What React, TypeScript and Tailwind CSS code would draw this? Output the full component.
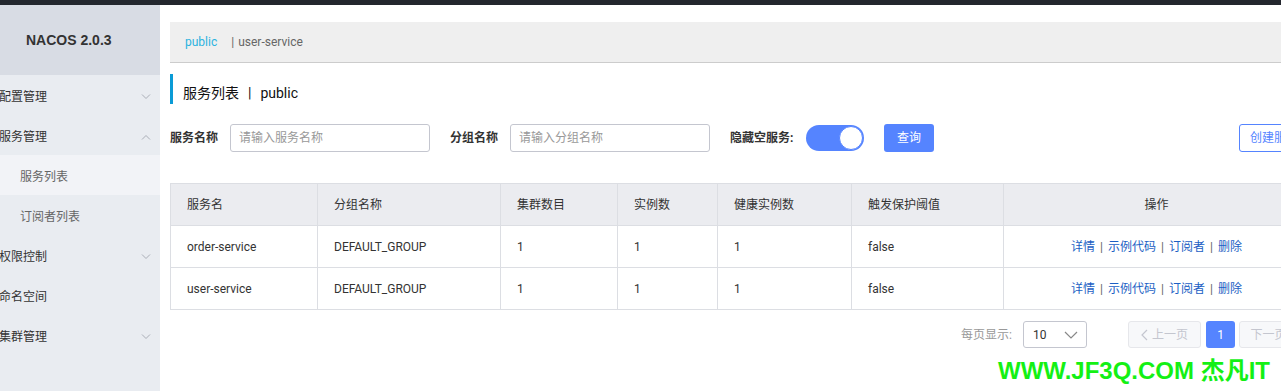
import React from "react";

const font = { fontFamily: 'Roboto, "Noto Sans CJK SC", sans-serif' };

const Chevron = ({ up = false }: { up?: boolean }) => (
  <svg width="10" height="6" viewBox="0 0 10 6" className="text-[#a9adb6]">
    <polyline
      points={up ? "1,5.5 5,1.5 9,5.5" : "1,0.5 5,4.5 9,0.5"}
      fill="none"
      stroke="currentColor"
      strokeWidth="1"
    />
  </svg>
);

const menu = [
  { label: "配置管理", chevron: "down" },
  { label: "服务管理", chevron: "up" },
  { label: "服务列表", sub: true, active: true },
  { label: "订阅者列表", sub: true },
  { label: "权限控制", chevron: "down" },
  { label: "命名空间" },
  { label: "集群管理", chevron: "down" },
];

const columns = [
  { title: "服务名", w: "w-[147px]" },
  { title: "分组名称", w: "w-[183px]" },
  { title: "集群数目", w: "w-[117px]" },
  { title: "实例数", w: "w-[100px]" },
  { title: "健康实例数", w: "w-[134px]" },
  { title: "触发保护阈值", w: "w-[152px]" },
  { title: "操作", w: "w-[306px]", center: true },
];

const rows = [
  ["order-service", "DEFAULT_GROUP", "1", "1", "1", "false"],
  ["user-service", "DEFAULT_GROUP", "1", "1", "1", "false"],
];

const App = () => {
  return (
    <div className="relative w-[1281px] h-[391px] overflow-hidden bg-white flex flex-col" style={font}>
      {/* top bar */}
      <div className="h-[5px] bg-[#23272e] shrink-0" />

      <div className="flex flex-1 min-h-0">
        {/* sidebar */}
        <aside className="w-[160px] shrink-0 bg-[#e9ecf1] flex flex-col">
          <div className="h-[70px] bg-[#d8dce4] flex items-center pl-[26px] text-[14px] font-bold text-[#333]" style={{ fontFamily: '"Liberation Sans", Arial, sans-serif' }}>
            NACOS 2.0.3
          </div>
          {menu.map((m) => (
            <div
              key={m.label}
              className={`h-[40px] flex items-center justify-between pt-[4px] pr-[9px] text-[12px] ${
                m.sub ? "pl-[20px] text-[#666]" : "-ml-[1px] text-[#333]"
              } ${m.active ? "bg-[#f2f3f7]" : ""}`}
            >
              <span>{m.label}</span>
              {m.chevron && <Chevron up={m.chevron === "up"} />}
            </div>
          ))}
        </aside>

        {/* main */}
        <main className="flex-1 min-w-0 overflow-hidden pl-[10px] pt-[17px]">
          <div className="w-[1139px]">
            {/* breadcrumb */}
            <div className="h-[41px] bg-[#efefef] border-b border-[#cccccc] flex items-center pl-[15px] text-[12px]">
              <span className="text-[#2bb3df]">public</span>
              <span className="ml-[14px] text-[#666]">|</span>
              <span className="ml-[4px] text-[#666]">user-service</span>
            </div>

            {/* title */}
            <div className="mt-[11px] h-[30px] border-l-[3px] border-[#0a9bd6] flex items-center pt-[8px] pl-[10px] text-[14px] text-[#111]">
              <span>服务列表</span>
              <span className="mx-[9px]">|</span>
              <span>public</span>
            </div>

            {/* filter */}
            <div className="mt-[20px] flex items-center h-[28px] text-[12px]">
              <span className="font-bold text-[#333] w-[60px]">服务名称</span>
              <input
                className="w-[200px] h-[28px] border border-[#c4c6cf] rounded-[3px] px-[8px] outline-none placeholder:text-[#999]"
                placeholder="请输入服务名称"
              />
              <span className="ml-[20px] font-bold text-[#333] w-[60px]">分组名称</span>
              <input
                className="w-[200px] h-[28px] border border-[#c4c6cf] rounded-[3px] px-[8px] outline-none placeholder:text-[#999]"
                placeholder="请输入分组名称"
              />
              <span className="ml-[20px] font-bold text-[#333] w-[76px]">隐藏空服务:</span>
              <div className="w-[58px] h-[26px] rounded-full bg-[#5584ff] flex items-center justify-end p-[1px]">
                <div className="w-[24px] h-[24px] rounded-full bg-white border border-[#5584ff]" />
              </div>
              <button className="ml-[20px] w-[50px] h-[28px] rounded-[3px] bg-[#5584ff] text-white">查询</button>
              <button className="ml-auto w-[70px] h-[28px] rounded-[3px] border border-[#5584ff] text-[#5584ff] bg-white">
                创建服务
              </button>
            </div>

            {/* table */}
            <table className="mt-[31px] w-[1139px] border-collapse table-fixed text-[12px] text-[#333]">
              <thead>
                <tr className="bg-[#ebecf0] h-[42px]">
                  {columns.map((c) => (
                    <th
                      key={c.title}
                      className={`${c.w} border border-[#dcdee3] font-normal px-[16px] ${c.center ? "text-center" : "text-left"}`}
                    >
                      {c.title}
                    </th>
                  ))}
                </tr>
              </thead>
              <tbody>
                {rows.map((r) => (
                  <tr key={r[0]} className="h-[42px]">
                    {r.map((v, i) => (
                      <td key={i} className="border border-[#dcdee3] px-[16px]">
                        {v}
                      </td>
                    ))}
                    <td className="border border-[#dcdee3] text-center text-[#1c5fc4]">
                      <span>详情</span>
                      <span className="mx-[5px] text-[#666]">|</span>
                      <span>示例代码</span>
                      <span className="mx-[5px] text-[#666]">|</span>
                      <span>订阅者</span>
                      <span className="mx-[5px] text-[#666]">|</span>
                      <span>删除</span>
                    </td>
                  </tr>
                ))}
              </tbody>
            </table>

            {/* pagination */}
            <div className="mt-[11px] flex items-center justify-end h-[27px] text-[12px]">
              <span className="text-[#999]">每页显示:</span>
              <div className="ml-[11px] w-[64px] h-[27px] border border-[#c4c6cf] rounded-[3px] flex items-center justify-between pl-[9px] pr-[8px] text-[#333]">
                <span>10</span>
                <svg width="14" height="8" viewBox="0 0 14 8">
                  <polyline points="1,1 7,7 13,1" fill="none" stroke="#888" strokeWidth="1.2" />
                </svg>
              </div>
              <div className="ml-[41px] w-[73px] h-[27px] border border-[#e6e7eb] bg-[#f7f8fa] rounded-[3px] flex items-center justify-center gap-[4px] text-[#c4c6cf]">
                <svg width="7" height="12" viewBox="0 0 7 12">
                  <polyline points="6,1 1,6 6,11" fill="none" stroke="#c4c6cf" strokeWidth="1.2" />
                </svg>
                <span>上一页</span>
              </div>
              <div className="ml-[5px] w-[29px] h-[27px] rounded-[3px] bg-[#5584ff] text-white flex items-center justify-center">1</div>
              <div className="ml-[4px] w-[70px] h-[27px] border border-[#e6e7eb] bg-[#f7f8fa] rounded-[3px] flex items-center justify-center gap-[4px] text-[#c4c6cf]">
                <span>下一页</span>
                <svg width="7" height="12" viewBox="0 0 7 12">
                  <polyline points="1,1 6,6 1,11" fill="none" stroke="#c4c6cf" strokeWidth="1.2" />
                </svg>
              </div>
            </div>
          </div>
        </main>
      </div>

      {/* watermark */}
      <div
        className="absolute left-[998px] top-[359px] text-[24px] font-bold text-[#14f014] leading-none whitespace-nowrap"
        style={{ fontFamily: '"Liberation Sans", Arial, "Noto Sans CJK SC", sans-serif' }}
      >
        WWW.JF3Q.COM 杰凡IT
      </div>
    </div>
  );
};

export default App;
